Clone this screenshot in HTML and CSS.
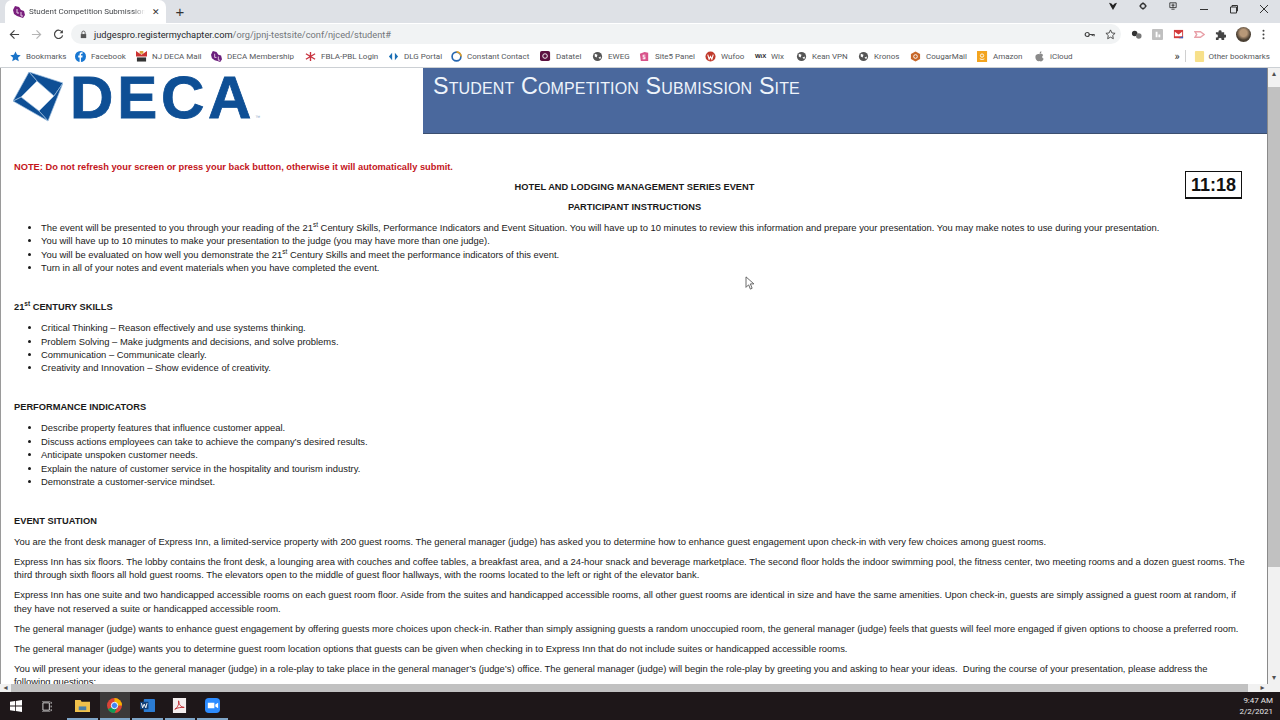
FILE: index.html
```html
<!DOCTYPE html>
<html lang="en">
<head>
  <meta charset="UTF-8">
  <title>Student Competition Submission Site</title>
  <link rel="stylesheet" href="styles.css">
</head>
<body>
  <div class="tabstrip">
    <div class="tab">
      <svg class="tabicon" viewBox="0 0 12 12"><path d="M2 0l4 1 2 3 3 1 1 4-2 3-3-1-3-1-3-2-1-4z" fill="#7a1f7d"/><path d="M4 3v4h2M8 6v4h2" fill="none" stroke="#e8cfe8"/></svg>
      <span class="tabtitle">Student Competition Submission</span>
      <span class="tabclose">✕</span>
    </div>
    <span class="newtab">+</span>
    <div class="wincontrols">
      <svg class="capicon" viewBox="0 0 10 10"><path d="M0 1l3 1 2 2 2-2 3-1-2 4-3 5-3-5z" fill="#222"/></svg>
      <svg class="capicon" viewBox="0 0 10 10"><circle cx="5" cy="5" r="3" fill="none" stroke="#222" stroke-width="1.4"/><path d="M5 0v2M5 8v2M0 5h2M8 5h2" stroke="#222"/></svg>
      <svg class="capicon" viewBox="0 0 10 10"><path d="M1 1h8v6H1zM5 2v5M3 4h4M3 9h4" fill="none" stroke="#222"/></svg>
      <svg class="winbtn" viewBox="0 0 10 10"><path d="M1 5.5h8" stroke="#333"/></svg>
      <svg class="winbtn" viewBox="0 0 10 10"><path d="M1.5 3h6v6h-6zM3 3V1.5h5.500V7H7.500" fill="none" stroke="#333"/></svg>
      <svg class="winbtn" viewBox="0 0 10 10"><path d="M1 1l8 8M9 1l-8 8" stroke="#333"/></svg>
    </div>
  </div>

  <div class="toolbar">
    <svg class="navicon" viewBox="0 0 12 12"><path d="M11 6H2M6 1.5L1.500 6 6 10.500" fill="none" stroke="#444" stroke-width="1.3"/></svg>
    <svg class="navicon" viewBox="0 0 12 12"><path d="M1 6h9M6 1.5L10.500 6 6 10.500" fill="none" stroke="#b5b5b5" stroke-width="1.3"/></svg>
    <svg class="navicon" viewBox="0 0 12 12"><path d="M10 3.500A4.500 4.500 0 1 0 10.500 7" fill="none" stroke="#444" stroke-width="1.3"/><path d="M10.800 1v3.600H7.200z" fill="#444"/></svg>
    <div class="omnibox">
      <svg class="lock" viewBox="0 0 10 10"><path d="M2 4.500h6V9H2z" fill="#555"/><path d="M3.200 4.500V3a1.800 1.800 0 0 1 3.600 0v1.500" fill="none" stroke="#555"/></svg>
      <span class="url"><b>judgespro.registermychapter.com</b>/org/jpnj-testsite/conf/njced/student#</span>
      <svg class="omniicon" viewBox="0 0 12 12"><circle cx="3.500" cy="6" r="2.200" fill="none" stroke="#444" stroke-width="1.3"/><path d="M5.500 6H11v2M9 6v1.500" fill="none" stroke="#444" stroke-width="1.3"/></svg>
      <svg class="omniicon" viewBox="0 0 12 12"><path d="M6 1l1.500 3.300 3.500.4-2.600 2.400.7 3.500L6 8.900l-3.100 1.700.7-3.500L1 4.700l3.500-.4z" fill="none" stroke="#444"/></svg>
    </div>
    <div class="extensions">
      <svg class="ext" viewBox="0 0 12 12"><circle cx="4" cy="5" r="3" fill="#333"/><circle cx="8.500" cy="7.500" r="3" fill="#777"/></svg>
      <svg class="ext" viewBox="0 0 12 12"><rect width="12" height="12" rx="1" fill="#c0c0c0"/><path d="M4 3h2v6H4zM7 6h2v3H7z" fill="#fff"/></svg>
      <svg class="ext" viewBox="0 0 12 12"><rect x="1" y="1" width="10" height="9" fill="#d33a3a"/><path d="M2 3l4 3 4-3v5H2z" fill="#fff"/><path d="M6 10h5V8z" fill="#3366cc"/></svg>
      <svg class="ext" viewBox="0 0 12 12"><path d="M1 3h6l4 3-4 3H1l2-3z" fill="none" stroke="#e8a0a8" stroke-width="1.5"/></svg>
      <svg class="ext" viewBox="0 0 12 12"><path d="M1 3.500h3a1.600 1.600 0 1 1 3 0h3v2.800a1.600 1.600 0 1 1 0 3V12H7a1.600 1.600 0 1 0-3 0H1V9a1.600 1.600 0 1 0 0-3z" fill="#444"/></svg>
      <span class="avatar"></span>
      <svg class="ext menu" viewBox="0 0 12 12"><circle cx="6" cy="2" r="1.100" fill="#444"/><circle cx="6" cy="6" r="1.100" fill="#444"/><circle cx="6" cy="10" r="1.100" fill="#444"/></svg>
    </div>
  </div>

  <div class="bookmarks">
    <span class="bm w65"><svg viewBox="0 0 12 12"><path d="M6 .5l1.700 3.700 4 .4-3 2.700.9 4L6 9.200l-3.600 2.100.9-4-3-2.700 4-.4z" fill="#1a73c8"/></svg>Bookmarks</span>
    <span class="bm w61"><svg viewBox="0 0 12 12"><circle cx="6" cy="6" r="6" fill="#1877d2"/><path d="M6.500 12V7H8l.3-2H6.500V4c0-.6.3-1 1-1h.8V1.400C7.200 1.200 5 1 5 3.600V5H3.500v2H5v5z" fill="#fff"/></svg>Facebook</span>
    <span class="bm w75"><svg viewBox="0 0 12 12"><path d="M0 0l6 4 6-4v6H0z" fill="#c33"/><path d="M4 0h4v3H4z" fill="#d9a13a"/><path d="M1 7h10v4.500H1z" fill="#333"/></svg>NJ DECA Mail</span>
    <span class="bm w94"><svg viewBox="0 0 12 12"><path d="M2 0l4 1 2 3 3 1 1 4-2 3-3-1-3-1-3-2-1-4z" fill="#6b1f7d"/><path d="M4 3v4h2M8 6v4h2" fill="none" stroke="#e8cfe8"/></svg>DECA Membership</span>
    <span class="bm w83"><svg viewBox="0 0 12 12"><path d="M6 1v10M1 3l10 6M11 3L1 9" stroke="#c8333f" stroke-width="1.5"/></svg>FBLA-PBL Login</span>
    <span class="bm w63"><svg viewBox="0 0 12 12"><path d="M4.500 2L1 6l3.500 4zM7.500 2L11 6l-3.500 4z" fill="#1b6fb5"/></svg>DLG Portal</span>
    <span class="bm w89"><svg viewBox="0 0 12 12"><circle cx="6" cy="6" r="4.800" fill="none" stroke="#2666b0" stroke-width="1.8"/><path d="M6 1a5 5 0 0 1 5 5" fill="none" stroke="#e8a020" stroke-width="1.8"/></svg>Constant Contact</span>
    <span class="bm w52"><svg viewBox="0 0 12 12"><rect width="11" height="11" rx="2" fill="#5c1140"/><circle cx="5.500" cy="5.500" r="2.500" fill="none" stroke="#fff"/></svg>Datatel</span>
    <span class="bm w47"><svg viewBox="0 0 12 12"><circle cx="6" cy="6" r="5" fill="#555"/><path d="M3 3l3 1-1 3-2-1zM7 7l3-1-1 3z" fill="#fff"/></svg>EWEG</span>
    <span class="bm w66"><svg viewBox="0 0 12 12"><path d="M1 3l5-2 4 1v9H2z" fill="#d8538a"/><path d="M4 4h3v1H5v1h2v3H4V8h2V7H4z" fill="#fff"/></svg>Site5 Panel</span>
    <span class="bm w50"><svg viewBox="0 0 12 12"><circle cx="6" cy="6" r="5.500" fill="#c0392b"/><path d="M3 4l1.500 5L6 6l1.500 3L9 4" fill="none" stroke="#fff" stroke-width="1.2"/></svg>Wufoo</span>
    <span class="bm w41"><span class="wixmark">WiX</span>Wix</span>
    <span class="bm w62"><svg viewBox="0 0 12 12"><circle cx="6" cy="6" r="5" fill="#555"/><path d="M3 3l3 1-1 3-2-1zM7 7l3-1-1 3z" fill="#fff"/></svg>Kean VPN</span>
    <span class="bm w52"><svg viewBox="0 0 12 12"><circle cx="6" cy="6" r="5" fill="#555"/><path d="M3 3l3 1-1 3-2-1zM7 7l3-1-1 3z" fill="#fff"/></svg>Kronos</span>
    <span class="bm w67"><svg viewBox="0 0 12 12"><path d="M6 .5l5 2.800v5.400l-5 2.800-5-2.800V3.300z" fill="#c8682a"/><circle cx="6" cy="6" r="2" fill="none" stroke="#fff"/></svg>CougarMail</span>
    <span class="bm w57"><svg viewBox="0 0 12 12"><rect width="11" height="12" fill="#f3a41f"/><path d="M3 8.500c2 1 3.500 1 5 0" stroke="#fff" fill="none"/><circle cx="5.500" cy="5" r="1.800" fill="none" stroke="#fff"/></svg>Amazon</span>
    <span class="bm"><svg viewBox="0 0 12 12"><path d="M6 3.500C7 2.800 9 2.800 10 4.500 8.500 5.500 8.500 7.500 10.500 8.500 9.500 11 8 12 6 11 4 12 1.500 9.500 1.500 6.500 1.500 3.500 4.500 2.800 6 3.500zM6 3c0-1.500 1-2.500 2-2.800C8.200 1.500 7.500 2.800 6 3z" fill="#8a8a8a"/></svg>iCloud</span>
    <span class="bm-more">»</span>
    <span class="bm-sep"></span>
    <span class="bm other"><svg viewBox="0 0 12 12"><rect x="1" width="10" height="12" rx="1" fill="#f7e08a"/></svg>Other bookmarks</span>
  </div>

  <div class="viewport">
    <div class="hscroll-row">
      <main class="page">
        <header class="banner">
          <div class="logo">
            <svg class="mark" viewBox="0 0 50 50">
              <path d="M16 0L50 11 41 24 24 9z"/>
              <path d="M50 11L35 49 26 39 41 24z"/>
              <path d="M35 49L0 29 8 25 26 39z"/>
              <path d="M0 29L16 0 24 9 8 25z"/>
            </svg>
            <span class="wordmark">DECA</span>
            <span class="tm">™</span>
          </div>
          <div class="title">Student Competition Submission Site</div>
        </header>

        <div class="content">
          <div class="timer">11:18</div>
          <p class="note">NOTE: Do not refresh your screen or press your back button, otherwise it will automatically submit.</p>
          <p class="center">HOTEL AND LODGING MANAGEMENT SERIES EVENT</p>
          <p class="center">PARTICIPANT INSTRUCTIONS</p>
          <ul>
            <li>The event will be presented to you through your reading of the 21<sup>st</sup> Century Skills, Performance Indicators and Event Situation. You will have up to 10 minutes to review this information and prepare your presentation. You may make notes to use during your presentation.</li>
            <li>You will have up to 10 minutes to make your presentation to the judge (you may have more than one judge).</li>
            <li>You will be evaluated on how well you demonstrate the 21<sup>st</sup> Century Skills and meet the performance indicators of this event.</li>
            <li>Turn in all of your notes and event materials when you have completed the event.</li>
          </ul>
          <p class="heading">21<sup>st</sup> CENTURY SKILLS</p>
          <ul>
            <li>Critical Thinking – Reason effectively and use systems thinking.</li>
            <li>Problem Solving – Make judgments and decisions, and solve problems.</li>
            <li>Communication – Communicate clearly.</li>
            <li>Creativity and Innovation – Show evidence of creativity.</li>
          </ul>
          <p class="heading">PERFORMANCE INDICATORS</p>
          <ul>
            <li>Describe property features that influence customer appeal.</li>
            <li>Discuss actions employees can take to achieve the company’s desired results.</li>
            <li>Anticipate unspoken customer needs.</li>
            <li>Explain the nature of customer service in the hospitality and tourism industry.</li>
            <li>Demonstrate a customer-service mindset.</li>
          </ul>
          <p class="heading">EVENT SITUATION</p>
          <p>You are the front desk manager of Express Inn, a limited-service property with 200 guest rooms. The general manager (judge) has asked you to determine how to enhance guest engagement upon check-in with very few choices among guest rooms.</p>
          <p>Express Inn has six floors. The lobby contains the front desk, a lounging area with couches and coffee tables, a breakfast area, and a 24-hour snack and beverage marketplace. The second floor holds the indoor swimming pool, the fitness center, two meeting rooms and a dozen guest rooms. The third through sixth floors all hold guest rooms. The elevators open to the middle of guest floor hallways, with the rooms located to the left or right of the elevator bank.</p>
          <p>Express Inn has one suite and two handicapped accessible rooms on each guest room floor. Aside from the suites and handicapped accessible rooms, all other guest rooms are identical in size and have the same amenities. Upon check-in, guests are simply assigned a guest room at random, if they have not reserved a suite or handicapped accessible room.</p>
          <p>The general manager (judge) wants to enhance guest engagement by offering guests more choices upon check-in. Rather than simply assigning guests a random unoccupied room, the general manager (judge) feels that guests will feel more engaged if given options to choose a preferred room.</p>
          <p>The general manager (judge) wants you to determine guest room location options that guests can be given when checking in to Express Inn that do not include suites or handicapped accessible rooms.</p>
          <p>You will present your ideas to the general manager (judge) in a role-play to take place in the general manager’s (judge’s) office. The general manager (judge) will begin the role-play by greeting you and asking to hear your ideas.&nbsp; During the course of your presentation, please address the<br>following questions:</p>
        </div>
      </main>
      <div class="vscroll">
        <span class="arrow">▴</span>
        <span class="vtrack"><span class="vthumb"></span></span>
        <span class="arrow">▾</span>
      </div>
    </div>
    <div class="hscroll">
      <span class="arrow">◂</span>
      <span class="hthumb"></span>
      <span class="arrow">▸</span>
    </div>
    <svg class="cursor" viewBox="0 0 10 16"><path d="M1 1v12l3-3 2 5 2-1-2-5h4z" fill="#fff" stroke="#555"/></svg>
  </div>

  <footer class="taskbar">
    <svg class="winlogo" viewBox="0 0 12 12"><path d="M0 1.700l5-.7v4.600H0zM5.800.9L12 0v5.600H5.800zM0 6.400h5V11l-5-.7zM5.800 6.400H12V12l-6.200-.9z" fill="#fff"/></svg>
    <svg class="taskview" viewBox="0 0 12 12"><path d="M1 2h7v8H1zM10 1v2M10 5v2M10 9v2M0 0h9M0 12h9" fill="none" stroke="#ddd"/></svg>
    <span class="taskapp"><svg viewBox="0 0 16 14"><path d="M0 1h6l1 2h9v11H0z" fill="#f0c14b"/><path d="M4 8h8v4H4z" fill="#4a7fa8"/></svg></span>
    <span class="taskapp active"><svg viewBox="0 0 16 16"><circle cx="8" cy="8" r="8" fill="#db4437"/><path d="M8 8L1 12a8 8 0 0 0 7 4l4-8z" fill="#0f9d58"/><path d="M8 0a8 8 0 0 1 8 8H8z" fill="#f4b400"/><circle cx="8" cy="8" r="3.400" fill="#4285f4" stroke="#fff"/></svg></span>
    <span class="taskapp"><svg viewBox="0 0 16 16"><rect x="4" y="1" width="12" height="14" rx="1" fill="#2b7cd3"/><rect y="4" width="9" height="8" fill="#124078"/><path d="M1.500 5.500l1.300 5 1.700-4 1.700 4 1.300-5" fill="none" stroke="#fff"/></svg></span>
    <span class="taskapp"><svg viewBox="0 0 16 16"><rect x="1" width="14" height="16" fill="#f3eeee"/><path d="M3 12c3-2 5-6 4-9 0 4 3 7 6 7-3 0-7 0-10 2z" fill="none" stroke="#c1272d"/></svg></span>
    <span class="taskapp"><svg viewBox="0 0 16 16"><rect width="16" height="16" rx="4" fill="#2d8cff"/><path d="M3 5h7v6H3zM11 7l3-2v6l-3-2z" fill="#fff"/></svg></span>
    <div class="clock">
      <span>9:47 AM</span>
      <span>2/2/2021</span>
    </div>
  </footer>
</body>
</html>
```

FILE: styles.css
```css
* {
  box-sizing: border-box;
}

html, body {
  margin: 0;
  padding: 0;
  height: 100%;
}

body {
  display: flex;
  flex-direction: column;
  width: 1280px;
  height: 720px;
  overflow: hidden;
  background: #fff;
  font-family: "Liberation Sans", Arial, sans-serif;
}

/* browser chrome */
.tabstrip {
  display: flex;
  align-items: flex-end;
  height: 23px;
  flex: none;
  background: #dee1e6;
  padding-left: 5px;
}

.tab {
  display: flex;
  align-items: center;
  width: 161px;
  height: 23px;
  padding: 0 6px 0 8px;
  background: #fff;
  border-radius: 7px 7px 0 0;
  font: 8px Roboto, sans-serif;
  color: #45484c;
}

.tabicon {
  width: 12px;
  height: 12px;
  flex: none;
  margin-right: 4px;
}

.tabtitle {
  flex: 1;
  min-width: 0;
  overflow: hidden;
  white-space: nowrap;
  -webkit-mask-image: linear-gradient(to right, #000 90%, transparent);
}

.tabclose {
  font-size: 9px;
  margin-left: 7px;
  color: #333;
}

.newtab {
  font: 15px "Liberation Sans", sans-serif;
  color: #333;
  width: 16px;
  margin-left: 6px;
  align-self: center;
  text-align: center;
}

.wincontrols {
  display: flex;
  align-items: flex-start;
  margin-left: auto;
  height: 23px;
  padding-top: 2px;
}

.capicon {
  width: 8px;
  height: 8px;
  margin-right: 22px;
}

.winbtn {
  width: 10px;
  height: 10px;
  margin: 2px 20px 0 0;
}

.winbtn:last-child {
  margin-right: 11px;
}

.toolbar {
  display: flex;
  align-items: center;
  height: 21px;
  flex: none;
  background: #fff;
  padding: 1px 0 0 9px;
}

.navicon {
  width: 11px;
  height: 11px;
  margin-right: 11px;
}

.omnibox {
  display: flex;
  align-items: center;
  width: 1050px;
  height: 20px;
  margin-left: -4px;
  padding: 0 5px 0 8px;
  background: #f1f3f4;
  border-radius: 10px;
  font: 9.27px Roboto, sans-serif;
  color: #72767a;
}

.lock {
  width: 9px;
  height: 9px;
  margin-right: 6px;
}

.url {
  flex: 1;
}

.url b {
  font-weight: 400;
  color: #25282c;
}

.omniicon {
  width: 11px;
  height: 11px;
  margin-left: 10px;
}

.extensions {
  display: flex;
  align-items: center;
  margin-left: 10px;
}

.ext {
  width: 11px;
  height: 11px;
  margin-right: 10px;
}

.avatar {
  width: 15px;
  height: 15px;
  border-radius: 50%;
  background: radial-gradient(circle at 50% 40%, #b89878 0 30%, #4a3f33 60%);
  margin-right: 7px;
}

.ext.menu {
  margin-right: 0;
}

.bookmarks {
  display: flex;
  align-items: center;
  height: 24px;
  flex: none;
  padding: 1px 0 0 10px;
  background: #fff;
  border-bottom: 1px solid #ccd0d4;
  font: 8px Roboto, sans-serif;
  color: #55585c;
  white-space: nowrap;
}

.bm {
  display: flex;
  align-items: center;
  flex: none;
}

.bm svg {
  width: 11px;
  height: 11px;
  flex: none;
  margin-right: 5px;
}

.w41 { width: 41px; }
.w47 { width: 47px; }
.w50 { width: 50px; }
.w52 { width: 52px; }
.w57 { width: 57px; }
.w61 { width: 61px; }
.w62 { width: 62px; }
.w63 { width: 63px; }
.w65 { width: 65px; }
.w66 { width: 66px; }
.w67 { width: 67px; }
.w75 { width: 75px; }
.w83 { width: 83px; }
.w89 { width: 89px; }
.w94 { width: 94px; }

.wixmark {
  width: 11px;
  margin-right: 5px;
  font: bold 6px "Liberation Sans", sans-serif;
  color: #222;
}

.bm-more {
  margin-left: auto;
  font-size: 11px;
  color: #333;
}

.bm-sep {
  width: 1px;
  height: 12px;
  background: #d0d0d0;
  margin: 0 8px 0 5px;
}

.other {
  margin-right: 10px;
}

.other svg {
  margin-right: 4px;
}

/* page area */
.viewport {
  display: flex;
  flex-direction: column;
  flex: 1;
  min-height: 0;
  position: relative;
}

.hscroll-row {
  display: flex;
  flex: 1;
  min-height: 0;
}

.page {
  flex: 1;
  min-width: 0;
  overflow: hidden;
  border-left: 1px solid #9a9a9a;
  border-right: 1px solid #8a8a8a;
}

.banner {
  display: flex;
  height: 66px;
}

.logo {
  display: flex;
  align-items: flex-start;
  width: 422px;
  padding: 4px 0 0 12px;
}

.mark {
  width: 50px;
  height: 50px;
  flex: none;
  fill: #0e4f95;
  stroke: #9fc0e0;
  stroke-width: 0.7;
}

.wordmark {
  font: bold 60px/66px "Liberation Sans", sans-serif;
  color: #0e4f95;
  margin: -7px 0 0 7px;
  letter-spacing: 3.8px;
  -webkit-text-stroke: 0.8px #0e4f95;
}

.tm {
  font-size: 5px;
  color: #8aa5c4;
  margin-top: 42px;
}

.title {
  flex: 1;
  background: #4a689d;
  border-bottom: 1px solid #3b4f70;
  color: #eef4fb;
  font-size: 23.3px;
  letter-spacing: 0.14px;
  font-variant: small-caps;
  padding: 5px 0 0 10px;
}

.content {
  position: relative;
  padding: 27px 12px 0 13px;
  font-size: 9.41px;
  line-height: 13.4px;
  color: #1a1a1a;
}

.content p {
  margin: 0 0 6.6px;
}

.content sup {
  font-size: 6.5px;
  line-height: 0;
}

.content .note,
.content .center,
.content .heading {
  font-size: 9.29px;
  font-weight: bold;
}

.content .note {
  color: #c4161c;
}

.content .center {
  text-align: center;
}

.content .heading {
  margin-top: 26.6px;
}

.content ul {
  margin: 6.6px 0 0;
  padding-left: 27px;
}

.timer {
  position: absolute;
  top: 37px;
  right: 25px;
  width: 57px;
  height: 28px;
  border: 1px solid #111;
  border-bottom-width: 2px;
  background: #fff;
  font: bold 18px/26px "Liberation Sans", sans-serif;
  text-align: center;
  color: #111;
}

.vscroll {
  display: flex;
  flex-direction: column;
  width: 12px;
  flex: none;
  background: #f1f1f1;
}

.arrow {
  font: 8px/12px "DejaVu Sans", sans-serif;
  color: #505050;
  text-align: center;
  flex: none;
}

.vtrack {
  flex: 1;
  padding-top: 7px;
}

.vthumb {
  display: block;
  height: 480px;
  background: #c1c1c1;
}

.hscroll {
  display: flex;
  align-items: center;
  height: 8px;
  flex: none;
  background: #f1f1f1;
}

.hscroll .arrow {
  width: 11px;
  line-height: 8px;
}

.hthumb {
  width: 1237px;
  height: 8px;
  background: #c1c1c1;
  margin-right: 9px;
}

.cursor {
  position: absolute;
  left: 745px;
  top: 208px;
  width: 9px;
  height: 14px;
}

/* windows taskbar */
.taskbar {
  display: flex;
  align-items: center;
  height: 28px;
  flex: none;
  background: #1e1719;
  padding-left: 10px;
  color: #e8e8e8;
}

.winlogo {
  width: 12px;
  height: 12px;
  margin-right: 20px;
}

.taskview {
  width: 11px;
  height: 11px;
  margin-right: 14px;
}

.taskapp {
  display: flex;
  align-items: center;
  justify-content: center;
  width: 30.5px;
  height: 28px;
  margin-right: 2px;
  border-bottom: 2px solid #7fa6c8;
}

.taskapp.active {
  background: #3c3a3a;
}

.taskapp svg {
  width: 15px;
  height: 15px;
}

.clock {
  display: flex;
  flex-direction: column;
  align-items: flex-end;
  margin-left: auto;
  padding-right: 7px;
  font: 8px/11.5px Roboto, sans-serif;
}
```
